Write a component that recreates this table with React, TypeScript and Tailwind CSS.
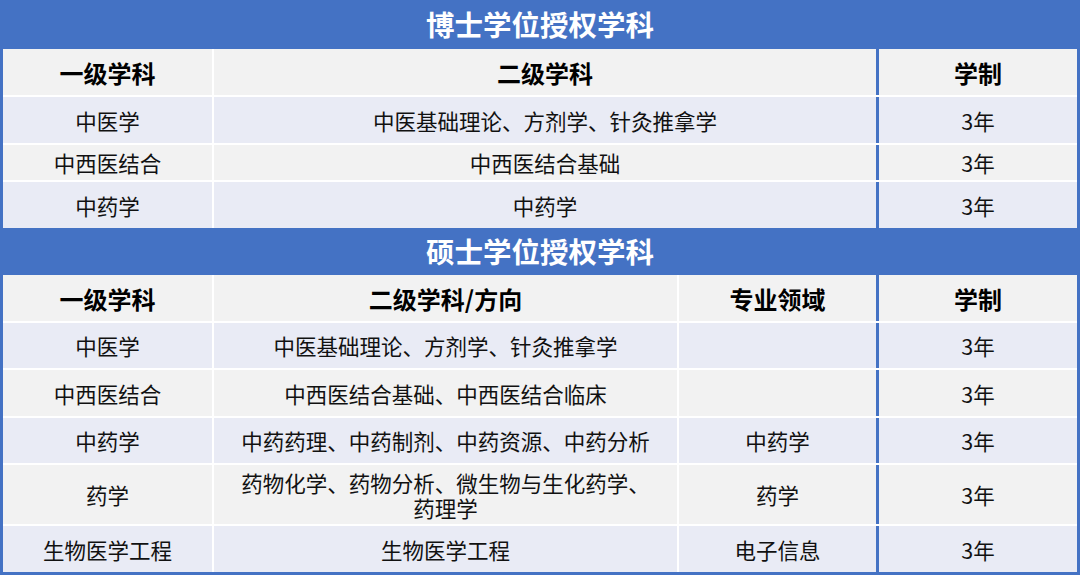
import React from "react";

const F = { fontFamily: '"Noto Sans CJK SC", "Noto Sans", sans-serif' };

type Cell = { t: React.ReactNode; w: string; b?: "white" | "blue" | "none" };

function Row({ cells, h, bg, bold }: { cells: Cell[]; h: string; bg: string; bold?: boolean }) {
  return (
    <div className={`flex ${h}`}>
      {cells.map((c, i) => (
        <div
          key={i}
          className={`${c.w} ${bg} flex items-center justify-center text-center ${
            c.b === "white" ? "border-l-2 border-white" : c.b === "blue" ? "border-l-[3px] border-[#4472C4]" : ""
          } ${bold ? "text-[24px] font-bold text-black" : "text-[21.5px] text-[#111]"} leading-[25px]`}
        >
          {c.t}
        </div>
      ))}
    </div>
  );
}

export default function App() {
  const A = "bg-[#E9EBF5]";
  const B = "bg-[#F2F2F2]";
  const c1 = (t: React.ReactNode): Cell => ({ t, w: "w-[209px]" });
  const d1 = (t: React.ReactNode): Cell => ({ t, w: "w-[664px]", b: "white" });
  const d2 = (t: React.ReactNode): Cell => ({ t, w: "w-[465px]", b: "white" });
  const d3 = (t: React.ReactNode): Cell => ({ t, w: "w-[199px]", b: "white" });
  const last = (t: React.ReactNode): Cell => ({ t, w: "flex-1", b: "blue" });

  return (
    <div className="w-[1080px] h-[575px] bg-white overflow-hidden" style={F}>
      <div className="h-[49px] bg-[#4472C4] flex items-center justify-center text-white font-bold text-[28.5px]">
        博士学位授权学科
      </div>
      <div className="border-x-[3px] border-[#4472C4] bg-white flex flex-col gap-[2px]">
        <Row h="h-[46px]" bg={B} bold cells={[c1("一级学科"), d1("二级学科"), last("学制")]} />
        <Row h="h-[46px]" bg={A} cells={[c1("中医学"), d1("中医基础理论、方剂学、针灸推拿学"), last("3年")]} />
        <Row h="h-[35px]" bg={B} cells={[c1("中西医结合"), d1("中西医结合基础"), last("3年")]} />
        <Row h="h-[46px]" bg={A} cells={[c1("中药学"), d1("中药学"), last("3年")]} />
      </div>
      <div className="h-[47px] bg-[#4472C4] flex items-center justify-center text-white font-bold text-[28.5px]">
        硕士学位授权学科
      </div>
      <div className="border-x-[3px] border-b-[3px] border-[#4472C4] bg-white flex flex-col gap-[2px]">
        <Row h="h-[46px]" bg={B} bold cells={[c1("一级学科"), d2("二级学科/方向"), d3("专业领域"), last("学制")]} />
        <Row h="h-[45px]" bg={A} cells={[c1("中医学"), d2("中医基础理论、方剂学、针灸推拿学"), d3(""), last("3年")]} />
        <Row h="h-[46px]" bg={B} cells={[c1("中西医结合"), d2("中西医结合基础、中西医结合临床"), d3(""), last("3年")]} />
        <Row h="h-[45px]" bg={A} cells={[c1("中药学"), d2("中药药理、中药制剂、中药资源、中药分析"), d3("中药学"), last("3年")]} />
        <Row
          h="h-[59px]"
          bg={B}
          cells={[
            c1("药学"),
            d2(
              <span>
                药物化学、药物分析、微生物与生化药学、
                <br />
                药理学
              </span>
            ),
            d3("药学"),
            last("3年"),
          ]}
        />
        <Row h="h-[46px]" bg={A} cells={[c1("生物医学工程"), d2("生物医学工程"), d3("电子信息"), last("3年")]} />
      </div>
    </div>
  );
}
